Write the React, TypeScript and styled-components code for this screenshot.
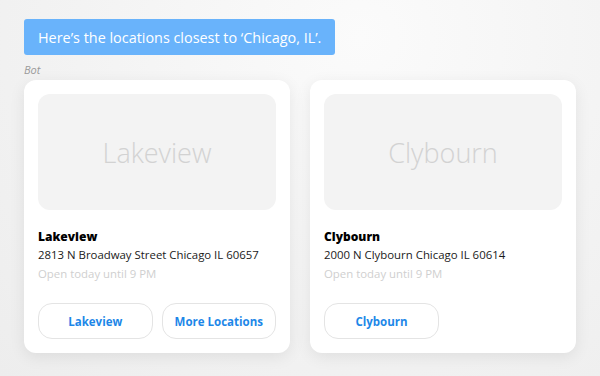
import React from 'react';
import styled, { createGlobalStyle } from 'styled-components';

const GlobalStyle = createGlobalStyle`
  html, body {
    margin: 0;
    padding: 0;
  }
  body {
    width: 600px;
    height: 376px;
    overflow: hidden;
    font-family: 'Open Sans', 'Noto Sans', sans-serif;
    background: radial-gradient(ellipse at 60% 10%, #fbfbfb 0%, #f3f3f3 55%, #ededed 100%);
  }
`;

const Page = styled.div`
  padding: 19px 24px 0 24px;
  display: flex;
  flex-direction: column;
  align-items: flex-start;
`;

const Bubble = styled.div`
  background: #69b3fb;
  color: #ffffff;
  font-size: 14.4px;
  height: 36px;
  box-sizing: border-box;
  padding: 0 14px;
  display: flex;
  align-items: center;
  border-radius: 3px;
`;

const Sender = styled.div`
  margin-top: 8px;
  font-size: 11px;
  font-style: italic;
  color: #9a9a9a;
  line-height: 13px;
`;

const Carousel = styled.div`
  margin-top: 4px;
  display: flex;
  gap: 20px;
`;

const Card = styled.div`
  width: 266px;
  height: 273px;
  box-sizing: border-box;
  background: #ffffff;
  border-radius: 12px;
  box-shadow: 0 4px 16px rgba(0, 0, 0, 0.08);
  padding: 14px;
  display: flex;
  flex-direction: column;
`;

const Hero = styled.div`
  height: 116px;
  border-radius: 12px;
  background: #f3f3f3;
  display: flex;
  align-items: center;
  justify-content: center;
  font-size: 27px;
  font-weight: 300;
  color: #d2d2d2;
`;

const Title = styled.div`
  margin-top: 18px;
  font-size: 12px;
  font-weight: 800;
  color: #000000;
  line-height: 17px;
`;

const Line = styled.div<{ $muted?: boolean }>`
  font-size: 11.4px;
  line-height: 19px;
  color: ${(p) => (p.$muted ? '#cfcfcf' : '#1a1a1a')};
  white-space: nowrap;
`;

const Actions = styled.div`
  margin-top: auto;
  display: flex;
  gap: 9px;
`;

const Action = styled.button`
  width: 115px;
  height: 36px;
  border: 1px solid #e4e4e4;
  border-radius: 14px;
  background: #ffffff;
  color: #1d87e8;
  font-family: inherit;
  font-size: 11.5px;
  font-weight: 700;
  cursor: pointer;
`;

type Location = {
  name: string;
  address: string;
  hours: string;
  actions: string[];
};

const locations: Location[] = [
  {
    name: 'Lakeview',
    address: '2813 N Broadway Street Chicago IL 60657',
    hours: 'Open today until 9 PM',
    actions: ['Lakeview', 'More Locations'],
  },
  {
    name: 'Clybourn',
    address: '2000 N Clybourn Chicago IL 60614',
    hours: 'Open today until 9 PM',
    actions: ['Clybourn'],
  },
];

export default function App() {
  return (
    <>
      <GlobalStyle />
      <Page>
        <Bubble>Here’s the locations closest to ‘Chicago, IL’.</Bubble>
        <Sender>Bot</Sender>
        <Carousel>
          {locations.map((loc) => (
            <Card key={loc.name}>
              <Hero>{loc.name}</Hero>
              <Title>{loc.name}</Title>
              <Line>{loc.address}</Line>
              <Line $muted>{loc.hours}</Line>
              <Actions>
                {loc.actions.map((a) => (
                  <Action key={a}>{a}</Action>
                ))}
              </Actions>
            </Card>
          ))}
        </Carousel>
      </Page>
    </>
  );
}
